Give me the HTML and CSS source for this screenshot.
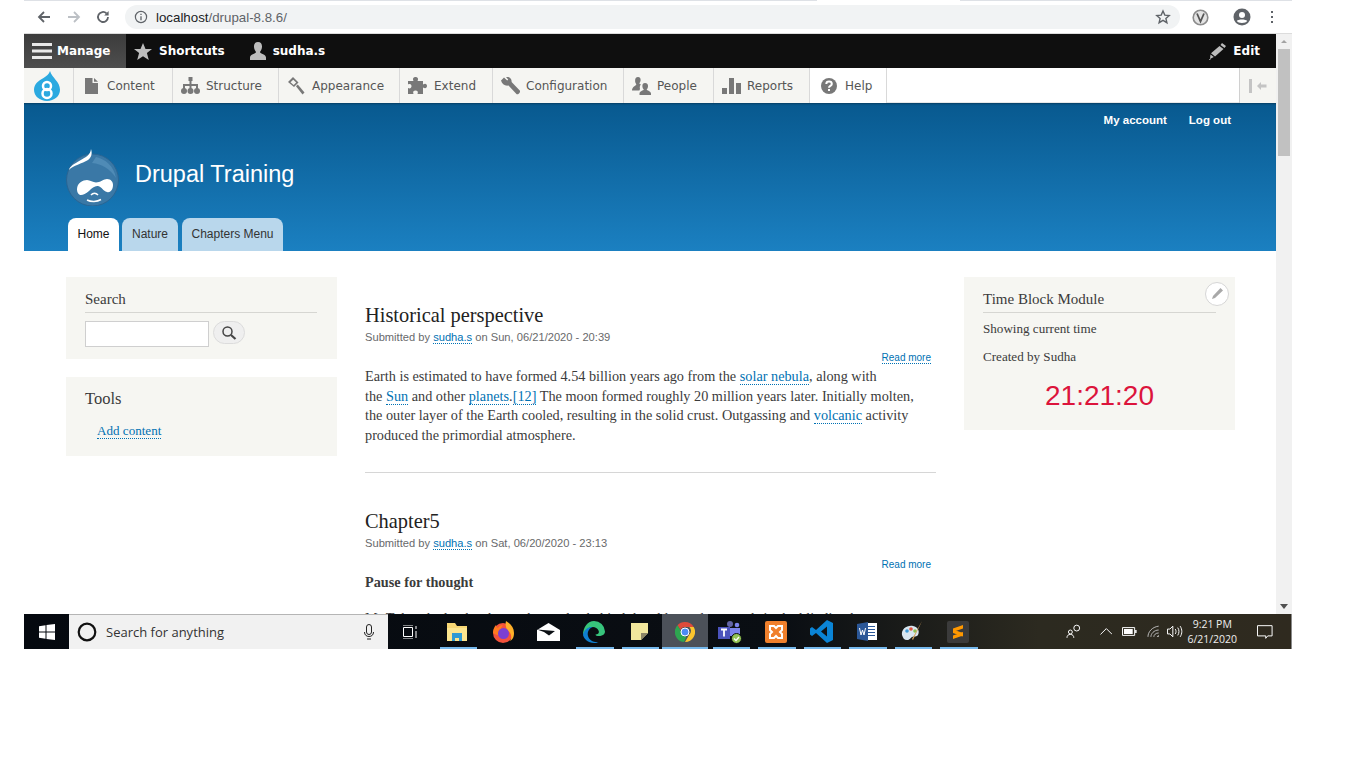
FILE: index.html
```html
<!DOCTYPE html>
<html lang="en">
<head>
  <meta charset="UTF-8">
  <title>Drupal Training</title>
  <link rel="stylesheet" href="styles.css">
</head>
<body>
  <div class="screen">

    <!-- Chrome bar -->
    <div class="tab-strip">
      <div class="strip-left"></div>
      <div class="strip-gap"></div>
      <div class="strip-right"></div>
    </div>
    <div class="browser-bar">
      <svg class="nav-icon" width="16" height="16" viewBox="0 0 16 16"><path d="M14 8H3M8 3 3 8l5 5" fill="none" stroke="#5f6368" stroke-width="1.8"/></svg>
      <svg class="nav-icon" width="16" height="16" viewBox="0 0 16 16"><path d="M2 8h11M8 3l5 5-5 5" fill="none" stroke="#bcc0c5" stroke-width="1.8"/></svg>
      <svg class="nav-icon reload" width="16" height="16" viewBox="0 0 16 16"><path d="M13 8a5 5 0 1 1-1.500-3.600" fill="none" stroke="#5f6368" stroke-width="1.8"/><path d="M13.600 2v4.400H9.200z" fill="#5f6368"/></svg>
      <div class="url-pill">
        <svg width="14" height="14" viewBox="0 0 14 14"><circle cx="7" cy="7" r="5.600" fill="none" stroke="#5f6368" stroke-width="1.2"/><path d="M7 6.200v4M7 3.800v1.300" stroke="#5f6368" stroke-width="1.3"/></svg>
        <span class="url-text">localhost<span class="url-path">/drupal-8.8.6/</span></span>
        <svg class="url-star" width="16" height="16" viewBox="0 0 16 16"><path d="m8 2 1.800 4.100 4.400.4-3.300 2.900 1 4.300L8 11.400l-3.900 2.300 1-4.300-3.300-2.900 4.400-.4z" fill="none" stroke="#5f6368" stroke-width="1.4"/></svg>
      </div>
      <svg class="ext-v" width="17" height="17" viewBox="0 0 17 17"><circle cx="8.500" cy="8.500" r="7.300" fill="#e4e4e4" stroke="#8c8c8c" stroke-width="1.6"/><path d="M5 4.500 8.500 12.500 12 4.500" fill="none" stroke="#555" stroke-width="1.8"/></svg>
      <svg class="ext-user" width="18" height="18" viewBox="0 0 18 18"><circle cx="9" cy="9" r="8.500" fill="#5f6368"/><circle cx="9" cy="7" r="3" fill="#fff"/><path d="M3.800 13c1.400-2 8.900-2 10.400 0-1.200 2.400-9 2.600-10.400 0z" fill="#fff"/></svg>
      <svg class="ext-dots" width="4" height="12" viewBox="0 0 4 12"><path d="M2 0v2M2 5v2M2 10v2" stroke="#5f6368" stroke-width="2"/></svg>
    </div>

    <!-- Page and its scrollbar -->
    <div class="viewport">
      <div class="page">

        <div class="toolbar-bar">
          <a class="bar-tab manage">
            <svg width="22" height="18" viewBox="0 0 22 18"><path d="M0 2.500h20M0 9h20M0 15.500h20" stroke="#e8e8e8" stroke-width="3"/></svg>
            Manage
          </a>
          <a class="bar-tab">
            <svg width="18" height="17" viewBox="0 0 18 17"><path d="m9 0 2.500 6h6.500l-5.100 4 1.900 7L9 13.200 3.200 17l1.900-7L0 6h6.500z" fill="#bdbdbd"/></svg>
            Shortcuts
          </a>
          <a class="bar-tab user">
            <svg width="16" height="18" viewBox="0 0 16 18"><path d="M8 0c3 0 4.200 2.200 4 5-.2 2.400-1.300 3.900-2 5 .3 1.800 6 2.400 6 5.500V18H0v-2.500c0-3.100 5.700-3.700 6-5.500-.7-1.100-1.800-2.600-2-5C3.800 2.200 5 0 8 0z" fill="#bdbdbd"/></svg>
            sudha.s
          </a>
          <a class="bar-tab edit">
            <svg width="17" height="17" viewBox="0 0 17 17"><path d="M13 0l4 3-1.500 2-4-3zM10.500 3l4 3-8.500 7.500-4-3.200zM1.500 11.500 4.800 14 1 16z" fill="#bdbdbd"/><path d="M0 16.500h1.500" stroke="#888"/></svg>
            Edit
          </a>
        </div>

        <div class="toolbar-tray">
          <a class="tray-logo">
            <svg width="28" height="30" viewBox="0 0 28 30"><path d="M17 0c-1 3.500-3.400 5-6.500 7C6 9.500 1 12.800 1 18.800 1 25.300 6.800 30 14 30s13-4.700 13-11.200C27 10.500 19 7 17 0z" fill="#2ba9e0"/><circle cx="14" cy="15" r="4" fill="none" stroke="#fff" stroke-width="2.500"/><circle cx="14" cy="22.500" r="4.500" fill="none" stroke="#fff" stroke-width="2.500"/></svg>
          </a>
          <a class="tray-item w-content">
            <svg width="13" height="16" viewBox="0 0 13 16"><path d="M0 0h7.500v5H13v11H0zM9 0l4 3.700H9z" fill="#787878"/></svg>
            Content
          </a>
          <a class="tray-item w-structure">
            <svg width="19" height="17" viewBox="0 0 19 17"><path d="M7.500 0h4v4h-1v3H17v5h-2V9h-4.500v3h-2V9H4v3H2V7h6.500V4h-1z" fill="#787878"/><circle cx="3" cy="14" r="3" fill="#787878"/><circle cx="9.500" cy="14" r="3" fill="#787878"/><circle cx="16" cy="14" r="3" fill="#787878"/></svg>
            Structure
          </a>
          <a class="tray-item w-appearance">
            <svg width="18" height="18" viewBox="0 0 18 18"><path d="M6 0l5.500 5.500L7 10 1 5z" fill="#787878"/><path d="M3.500 5.300 6.200 2.700l3 2.900L6.700 8z" fill="#f5f5f2"/><path d="M9 9.300l1.800-1.800L17.500 15.500 15.500 17.500z" fill="#787878"/></svg>
            Appearance
          </a>
          <a class="tray-item w-extend">
            <svg width="19" height="17" viewBox="0 0 19 17"><path d="M0 4h5.500c-1.500-3 .5-4 2-4s3.500 1 2 4H15v3.500c2.500-1.500 4-.3 4 1.500s-1.500 3-4 1.500V17H9.500c1-2.500-.2-3.500-2-3.500s-3 1-2 3.500H0v-6c2 1 3.500-.1 3.500-1.800S2 6.500 0 7.500z" fill="#787878"/></svg>
            Extend
          </a>
          <a class="tray-item w-config">
            <svg width="19" height="18" viewBox="0 0 19 18"><path d="M0 3.500 3 .5l3.200 3 1-1L5 0c2.800-.6 6 1.200 5.600 5l8.400 8.800c.3 1.800-1.300 3.700-3.300 3.500L7.500 8.500C4 9.200.8 7 0 3.500z" fill="#787878"/></svg>
            Configuration
          </a>
          <a class="tray-item w-people">
            <svg width="19" height="18" viewBox="0 0 19 18"><path d="M6 0c2 0 2.800 1.400 2.600 3.200-.1 1.400-.8 2.400-1.200 3 .1.700.7 1 1.600 1.400-1.200 1-1.500 2.700-1 4.400l-.6 1.500H0c0-3.800 3.900-4.600 4.400-6.300-.5-.6-1.200-1.600-1.300-3C3 1.400 4 0 6 0z" fill="#787878"/><path d="M13 6c2.200 0 3.200 1.500 3 3.400-.1 1.500-.9 2.500-1.300 3.200.2 1.100 4.300 1.600 4.300 4V18H7.500v-1.400c0-2.400 4-2.900 4.300-4-.5-.7-1.300-1.700-1.400-3.200C10.200 7.500 10.900 6 13 6z" fill="#787878"/></svg>
            People
          </a>
          <a class="tray-item w-reports">
            <svg width="19" height="16" viewBox="0 0 19 16"><path d="M0 10h5v6H0zM7 0h5v16H7zM14 5h5v11h-5z" fill="#787878"/></svg>
            Reports
          </a>
          <a class="tray-item w-help">
            <svg width="16" height="16" viewBox="0 0 16 16"><circle cx="8" cy="8" r="8" fill="#787878"/><path d="M5.300 6c0-3.200 5.500-3.200 5.500 0 0 2-2.800 1.900-2.800 3.800" fill="none" stroke="#fff" stroke-width="2"/><path d="M8 11v2" stroke="#fff" stroke-width="2"/></svg>
            Help
          </a>
          <div class="tray-space"></div>
          <a class="tray-toggle">
            <svg width="18" height="14" viewBox="0 0 18 14"><path d="M0 0h3v14H0z" fill="#c4c4c4"/><path d="M8 7l4-4v2.500h5.500v3H12V11z" fill="#c4c4c4"/></svg>
          </a>
        </div>

        <header class="site-header">
          <nav class="secondary-menu">
            <a>My account</a>
            <a>Log out</a>
          </nav>
          <div class="branding">
            <svg class="site-logo" width="54" height="57" viewBox="0 0 54 57">
              <circle cx="26.500" cy="31" r="26" fill="#3a78a6" stroke="#2a6593"/>
              <path d="M30 8c9 2 18 9 20 21-6-9-14-14-24-15z" fill="#4f8bb6"/>
              <path d="M25 0c-.5 6-5 8-11 11.500C8 15 4 17 3 21c4-5 13-6 19-10 3.500-2.500 4.500-6.500 3-11z" fill="#fff"/>
              <path d="M11 40c0-6 6-9 10-9 3 0 6 2.500 9 2.500 4 0 8-3.500 11-3.500 4 0 6 3 6 6 0 5-3 8-6 7-4-1-5-5-9-6-3-.5-6 2-9 5-3 2.500-6 4-8 4-2.500 0-4-2.500-4-6z" fill="#fff"/>
              <path d="M21 51c4 2 10 2 14-.5M25 46c2-2.500 5-2.500 7 0" fill="none" stroke="#fff" stroke-width="1.500"/>
            </svg>
            <span class="site-name">Drupal Training</span>
          </div>
          <ul class="primary-tabs">
            <li class="tab active">Home</li>
            <li class="tab tab-nature">Nature</li>
            <li class="tab tab-chapters">Chapters Menu</li>
          </ul>
        </header>

        <div class="layout">
          <aside class="sidebar">
            <section class="block block-search">
              <h2 class="block-title underlined">Search</h2>
              <div class="search-row">
                <input class="search-input" type="text">
                <button class="search-btn" type="button">
                  <svg width="16" height="16" viewBox="0 0 16 16"><circle cx="6.500" cy="6.500" r="4.500" fill="none" stroke="#444" stroke-width="1.500"/><path d="m10 10 4.500 4" stroke="#444" stroke-width="2.200"/></svg>
                </button>
              </div>
            </section>
            <section class="block block-tools">
              <h2 class="block-title large">Tools</h2>
              <a class="link tools-link">Add content</a>
            </section>
          </aside>

          <main class="main">
            <article class="node">
              <h2 class="node-title">Historical perspective</h2>
              <p class="submitted">Submitted by <a class="link">sudha.s</a> on Sun, 06/21/2020 - 20:39</p>
              <div class="read-more"><a class="link">Read more</a></div>
              <p class="body-text">Earth is estimated to have formed 4.54 billion years ago from the <a class="link">solar nebula</a>, along with<br>the <a class="link">Sun</a> and other <a class="link">planets</a>.<a class="link">[12]</a> The moon formed roughly 20 million years later. Initially molten,<br>the outer layer of the Earth cooled, resulting in the solid crust. Outgassing and <a class="link">volcanic</a> activity<br>produced the primordial atmosphere.</p>
            </article>
            <article class="node second">
              <h2 class="node-title">Chapter5</h2>
              <p class="submitted">Submitted by <a class="link">sudha.s</a> on Sat, 06/20/2020 - 23:13</p>
              <div class="read-more"><a>Read more</a></div>
              <p class="body-text"><strong>Pause for thought</strong></p>
              <p class="body-text next-para">Mr Tula asked to be shown the garden behind the old temple grounds in the blinding heat</p>
            </article>
          </main>

          <aside class="sidebar">
            <section class="block block-time">
              <a class="edit-pin">
                <svg width="14" height="14" viewBox="0 0 14 14"><path d="M10.500 1 13 3.500 5 11 2 12l1-3z" fill="#a8a8a8"/></svg>
              </a>
              <h2 class="block-title underlined">Time Block Module</h2>
              <p class="time-line">Showing current time</p>
              <p class="time-line">Created by Sudha</p>
              <div class="clock">21:21:20</div>
            </section>
          </aside>
        </div>
      </div>

      <div class="scrollbar">
        <svg width="16" height="15" viewBox="0 0 16 15"><path d="M5 9l3-3 3 3z" fill="#a3a3a3"/></svg>
        <div class="scroll-thumb"></div>
        <div class="scroll-rest"></div>
        <svg width="16" height="15" viewBox="0 0 16 15"><path d="M4 5h8l-4 5z" fill="#505050"/></svg>
      </div>
    </div>

    <!-- Windows taskbar -->
    <div class="taskbar">
      <div class="start">
        <svg width="16" height="16" viewBox="0 0 16 16"><path d="M0 2.200 6.500 1.300V7.500H0zM7.500 1.100 16 0v7.500H7.500zM0 8.500h6.500v6.200L0 13.800zM7.500 8.500H16V16L7.500 14.900z" fill="#fff"/></svg>
      </div>
      <div class="task-search">
        <svg width="20" height="20" viewBox="0 0 20 20"><circle cx="10" cy="10" r="8.300" fill="none" stroke="#111" stroke-width="2.200"/></svg>
        <span class="task-search-text">Search for anything</span>
        <svg class="mic" width="10" height="16" viewBox="0 0 10 16"><rect x="2.500" y=".5" width="5" height="10" rx="2.500" fill="none" stroke="#222"/><path d="M.5 8c0 3 2 4.500 4.500 4.500S9.500 11 9.500 8M3 15h4" fill="none" stroke="#222"/></svg>
      </div>
      <div class="task-view">
        <svg width="16" height="14" viewBox="0 0 16 14"><path d="M.5 2.500h9v9h-9zM0 0h10M0 14h10M13 1v3M13 6v7" fill="none" stroke="#fff"/></svg>
      </div>
      <div class="slot open">
        <svg width="20" height="18" viewBox="0 0 20 18"><path d="M0 0h8l2 3h10v15H0z" fill="#f7d774"/><path d="M0 5h20v13H0z" fill="#fce58f"/><path d="M5 10h10v8h-3v-3H8v3H5z" fill="#2f9ad4"/></svg>
      </div>
      <div class="slot">
        <svg width="22" height="22" viewBox="0 0 22 22"><circle cx="11" cy="12" r="10" fill="#f4523b"/><path d="M14 0c5 3 8 7 8 12 0 5-2 7-4 8 3-5 0-9-2-10-2-3-3-6-2-10z" fill="#ffb029"/><path d="M1 12c0-3 1-6 3-8 0 2 1 3 2 3 1-2 3-3 5-3-2 2-2 4-2 4 3-1 7 0 8 3-4-1-8 1-9 4-1-1-4-1-7-3z" fill="#ff7a1f"/><circle cx="11.500" cy="12.500" r="5.500" fill="#7b3fd1"/></svg>
      </div>
      <div class="slot">
        <svg width="23" height="18" viewBox="0 0 23 18"><path d="M0 7 11.500 0 23 7v11H0z" fill="#fff"/><path d="M0 6.500 18 8 12 12.500 7 9z" fill="#0b0f14"/></svg>
      </div>
      <div class="slot open">
        <svg width="22" height="22" viewBox="0 0 22 22"><path d="M11 0a11 11 0 0 1 11 10.500c0 3-3 4.500-6 4.500-2 0-3.500-.5-3.500-1.500 3 0 4-2 3-4C14 6 9 5 5.500 7.500 2.500 9.500 1 12 0 14 0 6 5 0 11 0z" fill="#37c47c"/><path d="M0 14C1 8 6 5.500 10 6c-4 1-6 5-5 9 1 4 6 7 11 6-2 1-3 1-5 1-6 0-10-4-11-8z" fill="#0f7fd0"/></svg>
      </div>
      <div class="slot open">
        <svg width="17" height="17" viewBox="0 0 17 17"><path d="M0 0h17v10l-7 7H0z" fill="#f1e79c"/><path d="M17 10h-7v7z" fill="#8c8566"/></svg>
      </div>
      <div class="slot active">
        <svg width="20" height="20" viewBox="0 0 20 20"><path d="M10 0a10 10 0 0 1 8.700 5H10a5 5 0 0 0-4.600 3L2.500 3.300A10 10 0 0 1 10 0z" fill="#de4a3b"/><path d="M18.700 5A10 10 0 0 1 10 20l4.300-7.500a5 5 0 0 0 0-7.500z" fill="#fbc52d"/><path d="M2.500 3.300 7 11a5 5 0 0 0 4.500 3.800L9 20A10 10 0 0 1 2.500 3.300z" fill="#2ea650"/><circle cx="10" cy="10" r="4" fill="#4c8bf5" stroke="#fff"/></svg>
      </div>
      <div class="slot open">
        <svg width="24" height="24" viewBox="0 0 24 24"><circle cx="12" cy="4" r="3" fill="#6264a7"/><circle cx="19" cy="5" r="2.300" fill="#7b83eb"/><path d="M9 8h13v8H9z" fill="#7b83eb"/><path d="M0 7h12v12H0z" fill="#4b53bc"/><path d="M3 9.500h6M6 9.500V16.500" stroke="#fff" stroke-width="1.800"/><circle cx="18.500" cy="18.500" r="5" fill="#92c353" stroke="#0b0f14"/><path d="m16 18.500 2 2 3-3.500" fill="none" stroke="#fff" stroke-width="1.300"/></svg>
      </div>
      <div class="slot open">
        <svg width="22" height="22" viewBox="0 0 22 22"><rect width="22" height="22" rx="2" fill="#f0802c"/><path d="M5 5h4l2 2 2-2h4v4l-2 2 2 2v4h-4l-2-2-2 2H5v-4l2-2-2-2z" fill="none" stroke="#fff" stroke-width="2"/></svg>
      </div>
      <div class="slot open">
        <svg width="23" height="23" viewBox="0 0 23 23"><path d="M17 0l6 3v17l-6 3L6 13l-4 3-2-1.500V8.500L2 7l4 3zM17 6.500l-6 5 6 5z" fill="#0a84d6" fill-rule="evenodd"/></svg>
      </div>
      <div class="slot open">
        <svg width="20" height="19" viewBox="0 0 20 19"><path d="M7 1h13v17H7z" fill="#fff"/><path d="M11 4.500h7M11 7.500h7M11 10.500h7M11 13.500h7" stroke="#2b5797"/><path d="M0 2 11 0v19L0 17z" fill="#2b5797"/><path d="m2.500 6 1.500 7 1.500-5 1.500 5 1.500-7" fill="none" stroke="#fff"/></svg>
      </div>
      <div class="slot open">
        <svg width="22" height="22" viewBox="0 0 22 22"><path d="M1 14C0 8 6 4 12 5c5 1 7 5 5 9-1 2-4 1-6 2s-2 3-5 3c-3 0-4-2-5-5z" fill="#d8e6f0"/><circle cx="6" cy="10" r="1.800" fill="#3f9ad6"/><circle cx="10" cy="8" r="1.800" fill="#e0533f"/><circle cx="14" cy="10" r="1.800" fill="#8cc152"/><path d="M21 0 12 19l-1-1z" fill="#d6a35c"/></svg>
      </div>
      <div class="slot open">
        <svg width="22" height="22" viewBox="0 0 22 22"><rect width="22" height="22" rx="2" fill="#3b3b3b"/><path d="M16 4 6 7.500V11l10-3.500zM6 8.500V12l10 3.500V12zM6 14.500V18l10-3.500V11z" fill="#ff9800"/></svg>
      </div>
      <div class="tray">
        <svg class="tray-people" width="16" height="15" viewBox="0 0 16 15"><circle cx="11" cy="4" r="3" fill="none" stroke="#fff"/><circle cx="4.500" cy="8" r="2" fill="none" stroke="#fff"/><path d="M1 14c0-2 1-3.500 3.500-3.500S8 12 8 14" fill="none" stroke="#fff"/></svg>
        <svg class="tray-chevron" width="13" height="7" viewBox="0 0 13 7"><path d="m.5 6.500 6-6 6 6" fill="none" stroke="#fff"/></svg>
        <svg class="tray-battery" width="15" height="9" viewBox="0 0 15 9"><path d="M.5.500h12.500v8H.5z" fill="none" stroke="#fff"/><path d="M2 2h9v5H2zM13.500 3H15v3h-1.500z" fill="#fff"/></svg>
        <svg class="tray-wifi" width="13" height="13" viewBox="0 0 13 13"><path d="M1 12C1 7 5 2 12 1M4 12c0-3 3-7 8-7M7 12c0-2 2-4 5-4" fill="none" stroke="#bbb"/><path d="M10 12h2v-2z" fill="#fff"/></svg>
        <svg class="tray-sound" width="16" height="13" viewBox="0 0 16 13"><path d="M.5 4h2.500L6 1v11L3 9H.5z" fill="none" stroke="#fff"/><path d="M8.500 4c1 1.500 1 3.500 0 5M11 2.500c1.700 2.500 1.700 5.500 0 8M13.500 1c2.300 3.500 2.300 7.500 0 11" fill="none" stroke="#fff"/></svg>
        <div class="tray-clock"><span>9:21 PM</span><span>6/21/2020</span></div>
        <svg class="tray-note" width="16" height="14" viewBox="0 0 16 14"><path d="M.5.500h15v10.500h-4.500l-2 2.500v-2.500H.5z" fill="none" stroke="#fff"/></svg>
        <div class="show-desktop"></div>
      </div>
    </div>
  </div>
</body>
</html>
```
FILE: styles.css
```css
html, body {
  margin: 0;
  padding: 0;
  background: #fff;
  height: 768px;
  overflow: hidden;
}

.screen {
  margin-left: 24px;
  width: 1268px;
  height: 649px;
  display: flex;
  flex-direction: column;
  overflow: hidden;
  font-family: "Liberation Sans", Arial, sans-serif;
}

a {
  text-decoration: none;
}

/* Chrome bar */
.tab-strip {
  display: flex;
  height: 1px;
  flex: none;
}

.strip-left {
  width: 793px;
  background: #dee1e6;
}

.strip-gap {
  width: 143px;
  background: #fff;
}

.strip-right {
  flex: 1;
  background: #dee1e6;
}

.browser-bar {
  display: flex;
  align-items: center;
  height: 32px;
  border-bottom: 1px solid #dcdcdc;
  flex: none;
  background: #fff;
}

.nav-icon {
  margin-left: 12px;
  flex: none;
}

.nav-icon + .nav-icon {
  margin-left: 14px;
}

.nav-icon.reload {
  margin-left: 13px;
}

.url-pill {
  display: flex;
  align-items: center;
  width: 1055px;
  height: 24px;
  margin-left: 14px;
  padding: 0 9px;
  box-sizing: border-box;
  background: #f1f3f4;
  border-radius: 12px;
}

.url-text {
  margin-left: 8px;
  font-size: 13.300px;
  color: #202124;
}

.url-path {
  color: #5f6368;
}

.url-star {
  margin-left: auto;
}

.ext-v {
  margin-left: 12px;
}

.ext-user {
  margin-left: 24px;
}

.ext-dots {
  margin-left: 19px;
}

/* Page */
.viewport {
  display: flex;
  flex: 1;
  min-height: 0;
}

.page {
  flex: 1;
  min-width: 0;
  overflow: hidden;
}

.scrollbar {
  width: 16px;
  flex: none;
  display: flex;
  flex-direction: column;
  background: #f1f1f1;
}

.scroll-thumb {
  width: 12px;
  height: 107px;
  margin-left: 2px;
  background: #c1c1c1;
}

.scroll-rest {
  flex: 1;
}

/* Admin toolbar */
.toolbar-bar {
  display: flex;
  height: 34px;
  background: #0f0f0f;
  font-family: "DejaVu Sans", Verdana, sans-serif;
  font-size: 12px;
  font-weight: bold;
  color: #fff;
}

.bar-tab {
  display: flex;
  align-items: center;
  gap: 7px;
  padding: 0 8px;
}

.manage {
  width: 102px;
  box-sizing: border-box;
  gap: 3px;
  background: linear-gradient(#3c3c3c, #4e4e4e);
}

.user {
  margin-left: 9px;
}

.edit {
  margin-left: auto;
  padding-right: 16px;
}

.toolbar-tray {
  display: flex;
  height: 35px;
  background: #fff;
  font-family: "DejaVu Sans", Verdana, sans-serif;
  font-size: 12px;
  color: #565656;
  box-shadow: inset 0 -1px 0 #e8e8e8;
}

.tray-logo {
  display: flex;
  align-items: center;
  justify-content: center;
  width: 50px;
  flex: none;
  padding-right: 3px;
  background: #f5f5f2;
  border-right: 1px solid #d9d9d9;
  box-sizing: border-box;
}

.tray-item {
  display: flex;
  align-items: center;
  gap: 9px;
  flex: none;
  padding-left: 8px;
  box-sizing: border-box;
  background: #f5f5f2;
  border-right: 1px solid #d9d9d9;
}

.w-content { width: 99px; padding-left: 11px; }
.w-structure { width: 106px; gap: 6px; }
.w-appearance { width: 121px; gap: 7px; }
.w-extend { width: 93px; gap: 7px; }
.w-config { width: 131px; gap: 6px; }
.w-people { width: 90px; gap: 6px; }
.w-reports { width: 96px; gap: 6px; }
.w-help { width: 77px; gap: 8px; padding-left: 11px; background: #fff; }

.tray-space {
  flex: 1;
}

.tray-toggle {
  display: flex;
  align-items: center;
  justify-content: center;
  width: 37px;
  flex: none;
  box-sizing: border-box;
  background: #f5f5f2;
  border-left: 1px solid #d0d0d0;
}

/* Site header */
.site-header {
  height: 148px;
  padding: 0 45px 0 42px;
  box-sizing: border-box;
  display: flex;
  flex-direction: column;
  background: linear-gradient(#08598f, #1b80c1);
  box-shadow: inset 0 2px 2px -1px rgba(0, 0, 0, 0.3);
  color: #fff;
}

.secondary-menu {
  display: flex;
  justify-content: flex-end;
  gap: 22px;
  padding-top: 10px;
  font-size: 11.500px;
  font-weight: bold;
  line-height: 14px;
}

.branding {
  display: flex;
  align-items: center;
  gap: 15px;
  margin-top: 22px;
  height: 57px;
}

.site-name {
  font-size: 23.500px;
  margin-top: -7px;
}

.site-logo {
  flex: none;
}

.primary-tabs {
  display: flex;
  gap: 4px;
  list-style: none;
  margin: 12px 0 0 2px;
  padding: 0;
}

.tab {
  height: 33px;
  line-height: 33px;
  box-sizing: border-box;
  text-align: center;
  font-size: 12px;
  color: #333;
  background: #b9d7ec;
  border-radius: 8px 8px 0 0;
}

.tab.active {
  width: 51px;
  margin-right: -1px;
  background: #fff;
  color: #111;
}

.tab-nature { width: 56px; }
.tab-chapters { width: 101px; }

/* Three column layout */
.layout {
  display: grid;
  grid-template-columns: 271px 571px 271px;
  column-gap: 28px;
  padding: 26px 0 0 42px;
  color: #3b3b3b;
  font-family: "Liberation Serif", "Times New Roman", serif;
}

.block {
  position: relative;
  background: #f6f6f2;
  padding: 0 19px;
  box-sizing: border-box;
}

.block-title {
  margin: 0;
  font-weight: normal;
  color: #3b3b3b;
}

.underlined {
  font-size: 15px;
  line-height: 24px;
  height: 25px;
  padding-top: 10px;
  border-bottom: 1px solid #d6d6d2;
}

.block-search {
  height: 82px;
  margin-bottom: 18px;
  padding: 0 20px 0 19px;
}

.search-row {
  display: flex;
  align-items: flex-start;
  gap: 4px;
  margin-top: 8px;
}

.search-input {
  width: 124px;
  height: 26px;
  padding: 0;
  box-sizing: border-box;
  border: 1px solid #cfcfcf;
  background: #fff;
}

.search-btn {
  width: 32px;
  height: 23px;
  padding: 0;
  display: flex;
  align-items: center;
  justify-content: center;
  border: 1px solid #dcdcdc;
  border-radius: 12px;
  background: #efefef;
}

.block-tools {
  height: 79px;
}

.large {
  font-size: 16.500px;
  line-height: 44px;
}

.tools-link {
  margin-left: 12px;
  font-size: 13.100px;
}

.link {
  color: #0071b3;
  border-bottom: 1px dotted #0071b3;
}

/* Main column */
.main {
  padding-top: 26px;
}

.node {
  padding-bottom: 27px;
  border-bottom: 1px solid #d6d6d6;
}

.node.second {
  margin-top: 36px;
  border-bottom: none;
}

.node-title {
  margin: 0;
  font-size: 20.400px;
  font-weight: normal;
  line-height: 24px;
  color: #222;
}

.submitted {
  margin: 3px 0 0;
  font-size: 11.150px;
  font-family: "Liberation Sans", Arial, sans-serif;
  line-height: 14px;
  color: #68696b;
}

.read-more {
  margin-top: 7px;
  padding-right: 5px;
  text-align: right;
  font-family: "Liberation Sans", Arial, sans-serif;
  font-size: 10px;
  line-height: 13px;
}

.second .read-more {
  margin-top: 8px;
}

.read-more a {
  color: #0071b3;
}

.body-text {
  margin: 3px 0 0;
  font-size: 14.250px;
  line-height: 19.600px;
}

.second .body-text {
  margin-top: 2px;
}

.second .next-para {
  margin-top: 16px;
  white-space: nowrap;
}

/* Time block */
.block-time {
  height: 153px;
}

.edit-pin {
  position: absolute;
  top: 5px;
  right: 6px;
  width: 24px;
  height: 24px;
  display: flex;
  align-items: center;
  justify-content: center;
  box-sizing: border-box;
  background: #fff;
  border: 1px solid #d6d6d6;
  border-radius: 50%;
}

.time-line {
  margin: 8px 0 0;
  font-size: 13.100px;
  line-height: 20px;
}

.underlined + .time-line {
  margin-top: 6px;
}

.clock {
  margin-top: 13px;
  text-align: center;
  font-family: "Liberation Sans", Arial, sans-serif;
  font-size: 28px;
  line-height: 32px;
  color: #dc143c;
}

/* Taskbar */
.taskbar {
  display: flex;
  height: 35px;
  flex: none;
  background: linear-gradient(90deg, #05090f 0%, #0a0e13 60%, #2c2a20 80%, #2f2a1f 100%);
}

.start {
  display: flex;
  align-items: center;
  justify-content: center;
  width: 45px;
  flex: none;
}

.task-search {
  display: flex;
  align-items: center;
  width: 319px;
  flex: none;
  padding: 0 14px 0 8px;
  box-sizing: border-box;
  background: #f1f1f1;
  border-top: 1px solid #b5b5b5;
}

.task-search-text {
  margin-left: 9px;
  font-family: "Open Sans", sans-serif;
  font-size: 13px;
  color: #333;
}

.mic {
  margin-left: auto;
}

.task-view {
  display: flex;
  align-items: center;
  justify-content: center;
  width: 45px;
  flex: none;
  margin-right: 1.500px;
}

.slot {
  display: flex;
  align-items: center;
  justify-content: center;
  width: 45.500px;
  flex: none;
  box-sizing: border-box;
  position: relative;
}

.slot.open::after {
  content: "";
  position: absolute;
  left: 5px;
  right: 3px;
  bottom: 0;
  height: 2px;
  background: #76b9ed;
}

.slot.active {
  background: #4c5159;
}

.slot.active::after {
  content: "";
  position: absolute;
  left: 0;
  right: 0;
  bottom: 0;
  height: 2px;
  background: #76b9ed;
}

.tray {
  display: flex;
  align-items: center;
  flex: 1;
  min-width: 0;
  color: #fff;
}

.tray-people { margin-left: 85.500px; }
.tray-chevron { margin-left: 18px; }
.tray-battery { margin-left: 10px; }
.tray-wifi { margin-left: 10px; }
.tray-sound { margin-left: 8px; }

.tray-clock {
  display: flex;
  flex-direction: column;
  align-items: center;
  width: 60px;
  margin-left: 0;
  font-family: "Open Sans", sans-serif;
  font-size: 10.500px;
  line-height: 15px;
  color: #eee;
}

.tray-note { margin-left: 16px; }

.show-desktop {
  width: 1px;
  height: 35px;
  margin-left: 18px;
  background: #8a8a8a;
}
```
